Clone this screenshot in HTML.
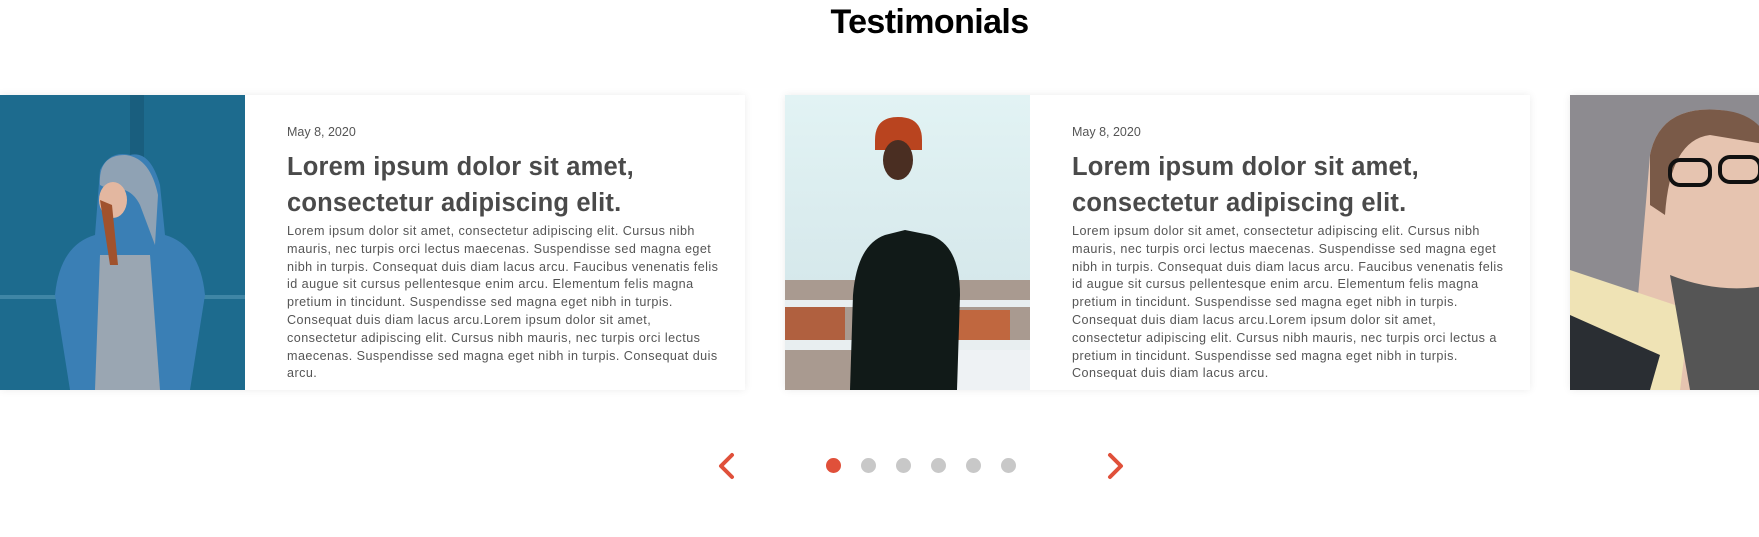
<!DOCTYPE html>
<html><head><meta charset="utf-8"><style>
*{margin:0;padding:0;box-sizing:border-box}
body{width:1759px;height:537px;background:#fff;overflow:hidden;position:relative;font-family:"Liberation Sans",sans-serif}
h1{position:absolute;top:3px;left:0;width:1859px;text-align:center;font-size:34px;font-weight:bold;color:#000;letter-spacing:-0.6px}
.card{position:absolute;top:95px;height:295px;width:745px;background:#fff;box-shadow:0 0 8px rgba(0,0,0,0.08)}
.img{position:absolute;left:0;top:0;width:245px;height:295px;overflow:hidden}
.txt{position:absolute;left:287px;top:30px;width:460px;color:#555;white-space:nowrap}
.date{font-size:12.5px;color:#555;margin-bottom:10px}
.h{font-size:25.5px;font-weight:bold;color:#4a4a4a;line-height:36px;letter-spacing:0.2px}
.p{font-size:12.6px;line-height:17.8px;color:#555;margin-top:2px;letter-spacing:0.45px}
.dot{position:absolute;top:458px;width:15px;height:15px;border-radius:50%;background:#c8c8c8}
</style></head><body>
<h1>Testimonials</h1>

<div class="card" style="left:0">
 <div class="img"><svg width="245" height="295"><rect width="245" height="295" fill="#1d6b8e"/><rect x="130" y="0" width="14" height="295" fill="#195e7e"/><rect x="0" y="200" width="245" height="4" fill="#3f86a6"/><path d="M70 295 L55 200 Q60 150 95 140 L100 75 Q110 55 130 60 Q150 55 160 90 L165 140 Q200 150 205 200 L190 295Z" fill="#3a7fb5"/><path d="M100 160 L150 160 L160 295 L95 295Z" fill="#9aa6b2"/><path d="M100 90 Q98 60 125 60 Q150 62 158 100 L155 150 L140 110 Q130 90 110 95Z" fill="#8fa2b4"/><ellipse cx="113" cy="105" rx="14" ry="18" fill="#e3b7a0"/><path d="M100 105 L110 170 L118 170 L112 110Z" fill="#a0522d"/></svg></div>
 <div class="txt"><div class="date">May 8, 2020</div><div class="h">Lorem ipsum dolor sit amet,<br>consectetur adipiscing elit.</div><div class="p">Lorem ipsum dolor sit amet, consectetur adipiscing elit. Cursus nibh<br>mauris, nec turpis orci lectus maecenas. Suspendisse sed magna eget<br>nibh in turpis. Consequat duis diam lacus arcu. Faucibus venenatis felis<br>id augue sit cursus pellentesque enim arcu. Elementum felis magna<br>pretium in tincidunt. Suspendisse sed magna eget nibh in turpis.<br>Consequat duis diam lacus arcu.Lorem ipsum dolor sit amet,<br>consectetur adipiscing elit. Cursus nibh mauris, nec turpis orci lectus<br>maecenas. Suspendisse sed magna eget nibh in turpis. Consequat duis<br>arcu.</div></div>
</div>

<div class="card" style="left:785px">
 <div class="img"><svg width="245" height="295"><defs><linearGradient id="s" x1="0" y1="0" x2="0" y2="1"><stop offset="0" stop-color="#e2f3f4"/><stop offset="1" stop-color="#cfe2e6"/></linearGradient></defs><rect width="245" height="295" fill="url(#s)"/><rect y="185" width="245" height="110" fill="#a99a90"/><rect x="0" y="210" width="60" height="40" fill="#b0603f"/><rect x="165" y="215" width="60" height="40" fill="#c0673f"/><rect y="205" width="245" height="7" fill="#e8eef0"/><rect y="245" width="245" height="10" fill="#e8eef0"/><rect x="170" y="255" width="75" height="40" fill="#eef2f4"/><path d="M65 295 L68 200 Q72 150 100 140 L120 135 L145 140 Q175 150 175 200 L172 295Z" fill="#111a18"/><path d="M90 45 Q90 22 113 22 Q137 22 137 45 L137 55 L90 55Z" fill="#b9441f"/><ellipse cx="113" cy="65" rx="15" ry="20" fill="#4a2e22"/></svg></div>
 <div class="txt"><div class="date">May 8, 2020</div><div class="h">Lorem ipsum dolor sit amet,<br>consectetur adipiscing elit.</div><div class="p">Lorem ipsum dolor sit amet, consectetur adipiscing elit. Cursus nibh<br>mauris, nec turpis orci lectus maecenas. Suspendisse sed magna eget<br>nibh in turpis. Consequat duis diam lacus arcu. Faucibus venenatis felis<br>id augue sit cursus pellentesque enim arcu. Elementum felis magna<br>pretium in tincidunt. Suspendisse sed magna eget nibh in turpis.<br>Consequat duis diam lacus arcu.Lorem ipsum dolor sit amet,<br>consectetur adipiscing elit. Cursus nibh mauris, nec turpis orci lectus a<br>pretium in tincidunt. Suspendisse sed magna eget nibh in turpis.<br>Consequat duis diam lacus arcu.</div></div>
</div>

<div class="card" style="left:1570px">
 <div class="img"><svg width="245" height="295"><rect width="245" height="295" fill="#8d8b90"/><path d="M80 60 Q90 10 150 15 Q200 20 200 80 L200 295 L60 295Z" fill="#e6c4b0"/><path d="M80 60 Q90 10 150 15 Q190 18 200 50 L140 40 Q100 45 95 120 L80 110Z" fill="#7a5a48"/><rect x="100" y="65" width="40" height="25" rx="10" fill="none" stroke="#111" stroke-width="4"/><rect x="150" y="62" width="40" height="25" rx="10" fill="none" stroke="#111" stroke-width="4"/><path d="M0 175 L120 215 L110 295 L0 295Z" fill="#efe3b5"/><path d="M0 220 L90 260 L80 295 L0 295Z" fill="#2a2e33"/><path d="M100 180 Q150 200 200 190 L200 295 L120 295Z" fill="#555"/></svg></div>
</div>

<svg style="position:absolute;left:716px;top:452px" width="22" height="28"><path d="M16 3 L5 14 L16 25" fill="none" stroke="#e0503a" stroke-width="4" stroke-linecap="round" stroke-linejoin="round"/></svg>
<svg style="position:absolute;left:1105px;top:452px" width="22" height="28"><path d="M5 3 L16 14 L5 25" fill="none" stroke="#e0503a" stroke-width="4" stroke-linecap="round" stroke-linejoin="round"/></svg>
<div class="dot" style="left:826px;background:#e0503a"></div>
<div class="dot" style="left:861px"></div>
<div class="dot" style="left:896px"></div>
<div class="dot" style="left:931px"></div>
<div class="dot" style="left:966px"></div>
<div class="dot" style="left:1001px"></div>
</body></html>
